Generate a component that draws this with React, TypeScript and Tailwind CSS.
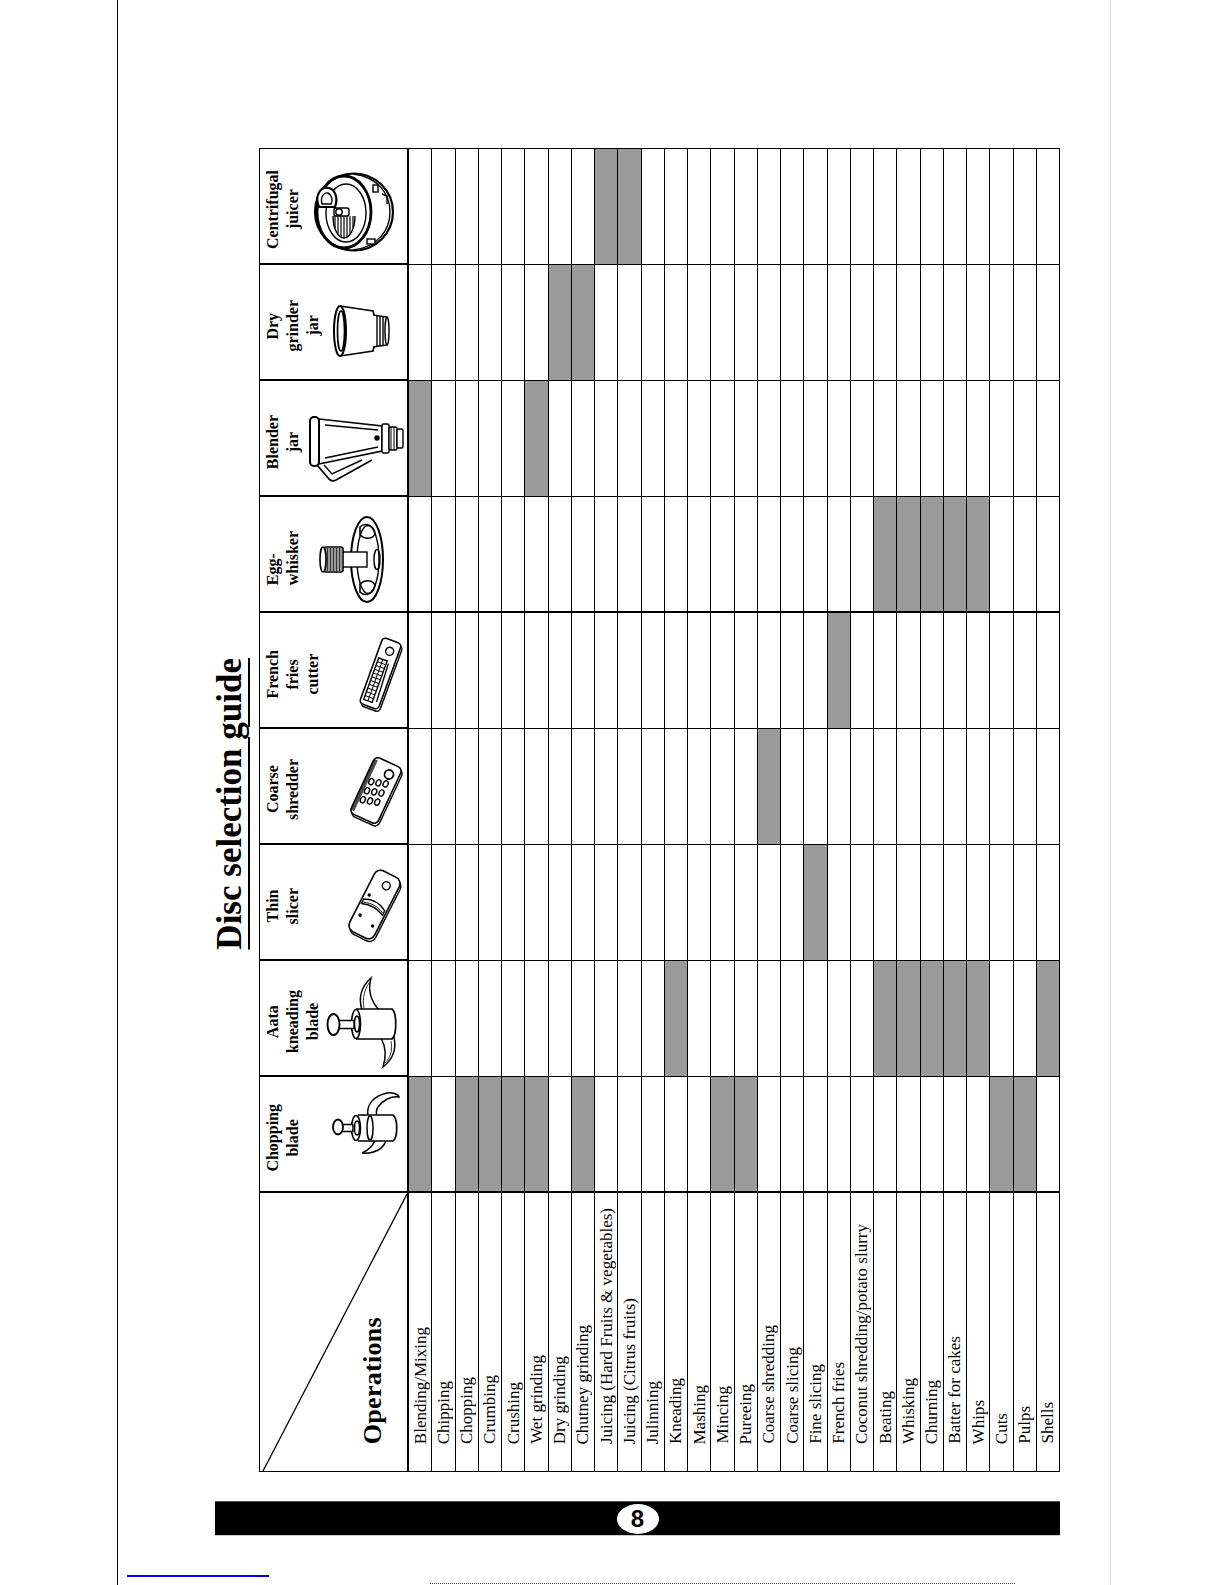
import type { ReactNode } from 'react';
import clsx from 'clsx';

const OPERATIONS = [
  'Blending/Mixing',
  'Chipping',
  'Chopping',
  'Crumbing',
  'Crushing',
  'Wet grinding',
  'Dry grinding',
  'Chutney grinding',
  'Juicing (Hard Fruits & vegetables)',
  'Juicing (Citrus fruits)',
  'Julinning',
  'Kneading',
  'Mashing',
  'Mincing',
  'Pureeing',
  'Coarse shredding',
  'Coarse slicing',
  'Fine slicing',
  'French fries',
  'Coconut shredding/potato slurry',
  'Beating',
  'Whisking',
  'Churning',
  'Batter for cakes',
  'Whips',
  'Cuts',
  'Pulps',
  'Shells',
];

function JuicerIcon() {
  return (
    <g fill="none" stroke="black" strokeWidth={1.4}>
      <ellipse cx="93" cy="63" rx="39" ry="38.5" strokeWidth={2.2} />
      <path d="M92 25 C117 28 129 45 129 63 C129 81 117 98 92 101" />
      <ellipse cx="83" cy="63" rx="27" ry="36" strokeWidth={2.8} />
      <ellipse cx="85" cy="64" rx="20" ry="29" />
      <path d="M58 58 C53 46 60 37 68 39 C75 41 77 50 74 58 Z" fill="white" strokeWidth={2.2} />
      <path d="M61 55 C59 48 63 43 67 44 C71 46 72 51 70 55 Z" />
      {Array.from({ length: 7 }, (_, i) => {
        const x = 74 + i * 3;
        const dx = (x - 83) / 11;
        const y2 = 67 + 22 * Math.sqrt(Math.max(0, 1 - dx * dx));
        return <line key={i} x1={x} y1={67} x2={x} y2={y2} strokeWidth={1.2} />;
      })}
      <path d="M72 67 A11 22 0 0 0 94 67" />
      <rect x="73" y="59" width="15" height="8" rx="2" fill="white" />
      <circle cx="78" cy="63" r="3.2" fill="white" />
      <rect x="106" y="90" width="8" height="5" fill="white" />
      <rect x="112" y="36" width="5" height="7" fill="white" />
      <path d="M121 45 L126 47 L126 55" />
    </g>
  );
}

function DryGrinderIcon() {
  return (
    <g fill="none" stroke="black" strokeWidth={1.4}>
      <path d="M79 41 L112 46 C115 55 115 77 112 86 L79 91" fill="white" strokeWidth={1.6} />
      <ellipse cx="79" cy="66" rx="6" ry="25" fill="white" strokeWidth={2} />
      <ellipse cx="80" cy="66" rx="3.5" ry="20" strokeWidth={1.6} />
      <path d="M112 50 L126 52 L126 80 L112 82" fill="white" />
      <line x1="116" y1="50.5" x2="116" y2="81.5" />
      <line x1="119" y1="51" x2="119" y2="81" />
      <line x1="122" y1="51.5" x2="122" y2="80.5" />
      <ellipse cx="126" cy="66" rx="2" ry="14" fill="white" />
    </g>
  );
}

function BlenderIcon() {
  return (
    <g fill="none" stroke="black" strokeWidth={1.4}>
      <path d="M56 84 L68 98 Q71 101 75 99 L111 79" strokeWidth={1.8} />
      <path d="M63 84 L71 93 L101 79" />
      <path d="M58 38 L121 45 L121 70 L58 83" fill="white" strokeWidth={1.6} />
      <path d="M64 44 L117 49 M64 77 L117 66" />
      <rect x="49" y="36" width="9" height="49" rx="4" fill="white" strokeWidth={2} />
      <rect x="121" y="43" width="7" height="29" rx="1.5" fill="white" />
      <rect x="128" y="46" width="8" height="23" rx="1.5" fill="white" />
      <rect x="136" y="48" width="6" height="19" rx="1.5" fill="white" />
      <path d="M130 46 L130 69 M133 46 L133 69" strokeWidth={1} />
      <circle cx="116" cy="57" r="2" fill="black" />
    </g>
  );
}

function EggWhiskerIcon() {
  return (
    <g fill="none" stroke="black" strokeWidth={1.4}>
      <ellipse cx="106" cy="62.5" rx="16" ry="42.5" fill="white" strokeWidth={2} />
      <ellipse cx="107" cy="62.5" rx="11" ry="34" />
      <path d="M99 30 C104 25 113 28 114 37 C111 43 103 42 99 38 Z" strokeWidth={1.6} />
      <path d="M99 95 C104 100 113 97 114 88 C111 82 103 83 99 87 Z" strokeWidth={1.6} />
      <ellipse cx="116" cy="62.5" rx="3" ry="10" />
      <rect x="80" y="55" width="26" height="15" fill="white" />
      <rect x="63" y="50" width="19" height="25" rx="2" fill="white" strokeWidth={1.6} />
      {Array.from({ length: 11 }, (_, i) => (
        <line key={i} x1={65 + i * 1.5} y1={51} x2={65 + i * 1.5} y2={74} strokeWidth={0.8} />
      ))}
      <ellipse cx="62" cy="62.5" rx="3" ry="12.5" fill="white" strokeWidth={1.6} />
    </g>
  );
}

function FrenchFriesIcon() {
  return (
    <g fill="none" stroke="black" strokeWidth={1.4} transform="translate(119.5 60.5) rotate(20)">
      <rect x="-8" y="-33" width="20" height="70" rx="4" fill="white" />
      <rect x="-10" y="-35" width="20" height="70" rx="4" fill="white" strokeWidth={1.6} />
      <circle cx="1" cy="-24" r="4" />
      <rect x="-7" y="-14" width="9" height="44" fill="white" />
      <path d="M-2.5 -14 V30 M-7 -10 H2 M-7 -6 H2 M-7 -2 H2 M-7 2 H2 M-7 6 H2 M-7 10 H2 M-7 14 H2 M-7 18 H2 M-7 22 H2 M-7 26 H2" strokeWidth={0.9} />
      <path d="M4 -12 L6 28" />
    </g>
  );
}

function ShredderIcon() {
  const holes = [
    [-8, -6],
    [-1, -8],
    [6, -10],
    [-8, 4],
    [-1, 2],
    [6, 0],
    [-8, 14],
    [-1, 12],
    [6, 10],
  ];
  return (
    <g fill="none" stroke="black" strokeWidth={1.4} transform="translate(115 61.5) rotate(25)">
      <rect x="-13" y="-29" width="30" height="62" rx="5" fill="white" />
      <rect x="-15" y="-31" width="30" height="62" rx="5" fill="white" strokeWidth={1.6} />
      <rect x="-15" y="-28" width="4" height="56" fill="black" stroke="none" opacity={0.7} />
      <circle cx="5" cy="-20" r="4.5" strokeWidth={1.8} />
      {holes.map(([x, y], i) => (
        <ellipse key={i} cx={x} cy={y} rx="2.4" ry="3.2" />
      ))}
    </g>
  );
}

function ThinSlicerIcon() {
  return (
    <g fill="none" stroke="black" strokeWidth={1.4} transform="translate(113.5 59.5) rotate(27)">
      <rect x="-12" y="-32" width="28" height="68" rx="7" fill="white" />
      <rect x="-14" y="-34" width="28" height="68" rx="7" fill="white" strokeWidth={1.6} />
      <circle cx="2" cy="-22" r="4" />
      <path d="M-12 0 C-4 -4 4 -4 12 1 L12 6 C4 2 -4 2 -12 5 Z" />
      <path d="M-11 3 C-3 0 4 0 11 4" strokeWidth={0.8} />
      <circle cx="-8" cy="16" r="1" fill="black" />
      <circle cx="8" cy="20" r="1" fill="black" />
      <circle cx="-9" cy="-6" r="1" fill="black" />
    </g>
  );
}

function KneadingBladeIcon() {
  return (
    <g fill="none" stroke="black" strokeWidth={1.5}>
      <path d="M101 49 C97 36 101 25 110 17 C107 28 108 38 118 49 Z" fill="white" />
      <path d="M103 47 C101 37 104 28 108 22" strokeWidth={0.8} />
      <path d="M133 76 C136 90 131 99 122 106 C125 97 125 86 120 77 Z" fill="white" />
      <path d="M130 80 C132 90 129 97 124 102" strokeWidth={0.8} />
      <path d="M95 48 L131 48 C136 52 136 74 131 78 L95 78" fill="white" strokeWidth={1.7} />
      <ellipse cx="95" cy="63" rx="4.5" ry="14.5" fill="white" strokeWidth={1.6} />
      <ellipse cx="96" cy="63" rx="2.5" ry="8" />
      <rect x="78" y="59.5" width="15" height="8" fill="white" />
      <ellipse cx="72.5" cy="63.5" rx="6" ry="10.5" fill="white" strokeWidth={1.9} />
    </g>
  );
}

function ChoppingBladeIcon() {
  return (
    <g fill="none" stroke="black" strokeWidth={1.5}>
      <path d="M107 39 C105 27 113 19 126 16 C131 15 137 17 138 20 C130 19 122 23 117 30 C115 33 115 36 116 39 Z" fill="white" />
      <path d="M125 63 C123 72 113 77 101 76 C108 73 112 69 114 63 Z" fill="white" />
      <path d="M97 38 L132 38 C137 42 137 60 132 64 L97 64" fill="white" strokeWidth={1.7} />
      <ellipse cx="109" cy="51" rx="3" ry="12" />
      <ellipse cx="95" cy="51" rx="4.5" ry="12.5" fill="white" strokeWidth={1.6} />
      <ellipse cx="96" cy="51" rx="2.5" ry="7" />
      <rect x="81" y="47.5" width="11" height="7" fill="white" />
      <ellipse cx="77" cy="50" rx="5" ry="7.5" fill="white" strokeWidth={1.8} />
    </g>
  );
}

interface Tool {
  lines: string[];
  icon: ReactNode;
  shaded: number[];
  alignStart?: boolean;
  thick?: boolean;
}

const TOOLS: Tool[] = [
  { lines: ['Centrifugal', 'juicer'], icon: <JuicerIcon />, shaded: [8, 9] },
  { lines: ['Dry', 'grinder', 'jar'], icon: <DryGrinderIcon />, shaded: [6, 7] },
  { lines: ['Blender', 'jar'], icon: <BlenderIcon />, shaded: [0, 5] },
  {
    lines: ['Egg-', 'whisker'],
    icon: <EggWhiskerIcon />,
    shaded: [20, 21, 22, 23, 24],
    alignStart: true,
    thick: true,
  },
  { lines: ['French', 'fries', 'cutter'], icon: <FrenchFriesIcon />, shaded: [18] },
  { lines: ['Coarse', 'shredder'], icon: <ShredderIcon />, shaded: [15] },
  { lines: ['Thin', 'slicer'], icon: <ThinSlicerIcon />, shaded: [17] },
  {
    lines: ['Aata', 'kneading', 'blade'],
    icon: <KneadingBladeIcon />,
    shaded: [11, 20, 21, 22, 23, 24, 27],
  },
  {
    lines: ['Chopping', 'blade'],
    icon: <ChoppingBladeIcon />,
    shaded: [0, 2, 3, 4, 5, 7, 13, 14, 25, 26],
    thick: true,
  },
];

function ToolRow({ tool }: { tool: Tool }) {
  return (
    <div
      className={clsx(
        'flex h-[116px] shrink-0 border-black',
        tool.thick ? 'border-b-2' : 'border-b'
      )}
    >
      <div
        className={clsx(
          'grid w-[149px] shrink-0 border-r-2 border-black',
          !tool.thick && 'border-b'
        )}
      >
        <div className="col-start-1 row-start-1 self-center justify-self-start pl-[3px] translate-y-[4px]">
          <div
            className={clsx(
              '[writing-mode:vertical-rl] rotate-180 font-bold text-[16px] leading-[20px] whitespace-nowrap',
              tool.alignStart ? 'text-start' : 'text-center'
            )}
          >
            {tool.lines.map((line) => (
              <div key={line}>{line}</div>
            ))}
          </div>
        </div>
        <svg
          className="col-start-1 row-start-1 w-[147px] h-[114px]"
          viewBox="-1 0 147 114"
        >
          {tool.icon}
        </svg>
      </div>

      {OPERATIONS.map((operation, index) => (
        <div
          key={operation}
          className={clsx(
            'flex-1 border-r border-black last:border-r-0',
            tool.shaded.includes(index) && 'bg-[#9b9b9b]'
          )}
        />
      ))}
    </div>
  );
}

function OperationsRow() {
  return (
    <div className="flex flex-1">
      <div className="grid w-[149px] shrink-0 border-r-2 border-black">
        <svg
          className="col-start-1 row-start-1 w-[147px] h-[278px]"
          viewBox="0 0 147 278"
        >
          <line x1="3" y1="278" x2="147" y2="1" stroke="black" strokeWidth={1.3} />
        </svg>
        <div className="col-start-1 row-start-1 self-end justify-self-end mr-[21px] mb-[27px]">
          <div className="[writing-mode:vertical-rl] rotate-180 font-bold text-[26px] leading-none tracking-[0.3px] whitespace-nowrap">
            Operations
          </div>
        </div>
      </div>

      {OPERATIONS.map((operation) => (
        <div
          key={operation}
          className="flex flex-1 items-end justify-center pb-[27px] border-r border-black last:border-r-0"
        >
          <span className="[writing-mode:vertical-rl] rotate-180 text-[17px] leading-none whitespace-nowrap">
            {operation}
          </span>
        </div>
      ))}
    </div>
  );
}

export default function App() {
  return (
    <div className="flex w-[1225px] h-[1585px] overflow-hidden bg-white text-black font-['Liberation_Serif','Times_New_Roman',serif]">
      <div className="w-[117px] shrink-0" />

      <div className="flex flex-col w-[994px] shrink-0 border-l border-l-black border-r border-r-[#d9d9d9]">
        <div className="flex pt-[148px] pl-[87px]">
          <div className="flex items-center w-[54px] h-[1324px] shrink-0 pb-[12px]">
            <span className="ml-[7px] [writing-mode:vertical-rl] rotate-180 font-bold text-[35px] leading-none whitespace-nowrap underline decoration-2 [text-underline-position:left]">
              Disc selection guide
            </span>
          </div>

          <div className="flex flex-col w-[801px] h-[1324px] shrink-0 border border-black">
            {TOOLS.map((tool) => (
              <ToolRow key={tool.lines.join(' ')} tool={tool} />
            ))}
            <OperationsRow />
          </div>
        </div>

        <div className="flex items-center justify-center ml-[97px] mt-[29px] w-[845px] h-[35px] bg-black border-t border-t-[#555555] border-b border-b-[#cccccc]">
          <div className="flex items-center justify-center w-[42px] h-[30px] rounded-[50%] bg-white font-['Liberation_Sans',Arial,sans-serif] font-bold text-[24px] leading-none">
            8
          </div>
        </div>

        <div className="ml-[9px] mt-[39px] w-[142px] h-[2px] bg-[#0000ee]" />
        <div className="ml-[312px] mt-[6px] w-[585px] border-t border-dotted border-[#444444]" />
      </div>
    </div>
  );
}
